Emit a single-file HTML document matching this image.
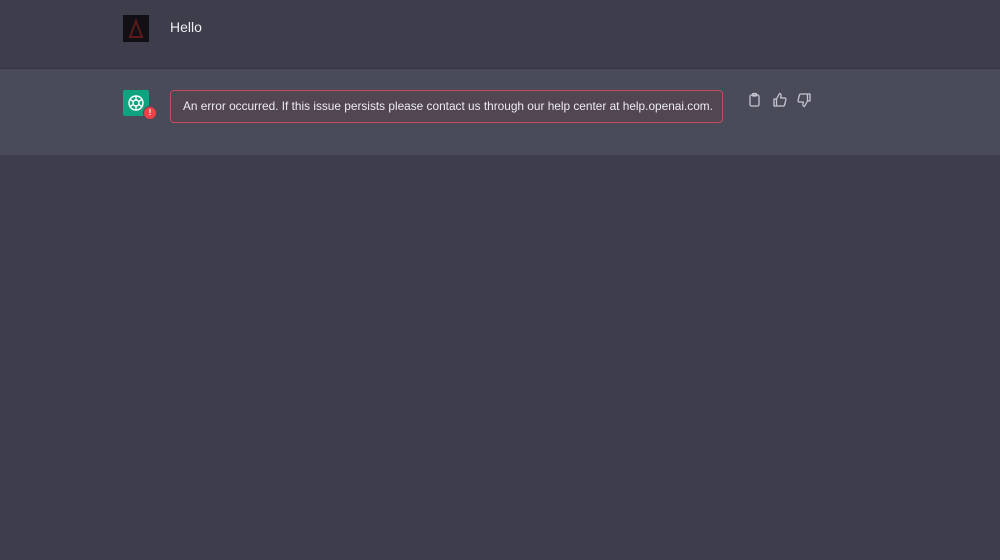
<!DOCTYPE html>
<html><head><meta charset="utf-8"><style>
html,body{margin:0;padding:0;width:1000px;height:560px;overflow:hidden;background:#3e3d4b;font-family:"Liberation Sans",sans-serif;}
.row1{position:absolute;left:0;top:0;width:1000px;height:68px;background:#3e3d4b;border-bottom:1px solid #353440;}
.row2{position:absolute;left:0;top:69px;width:1000px;height:86px;background:#4a4b59;border-bottom:1px solid #3e3d4b;}
.av1{position:absolute;left:123px;top:15px;width:26px;height:27px;background:#121015;}
.hello{position:absolute;left:170px;top:19px;color:#eceef1;font-size:14px;}
.av2{position:absolute;left:123px;top:90px;width:26px;height:26px;background:#10a37f;border-radius:2px;}
.err{position:absolute;left:143px;top:106px;width:12px;height:12px;border-radius:50%;background:#ef4146;border:1px solid #4a4b59;color:#fff;font-size:8px;text-align:center;line-height:12px;font-weight:bold;}
.box{position:absolute;left:170px;top:90px;width:553px;height:33px;border:1px solid #c9485e;border-radius:4px;background:#514652;box-sizing:border-box;color:#ececf1;font-size:11.85px;line-height:31px;padding-left:12px;white-space:nowrap;}
.ic{position:absolute;top:92px;}
</style></head><body>
<div class="row1"></div>
<div class="row2"></div>
<div class="av1"><svg width="26" height="27" viewBox="0 0 26 27"><path d="M7 22 L13 6 L19 22 Z" fill="none" stroke="#5a1a1a" stroke-width="2"/></svg></div>
<div class="hello">Hello</div>
<div class="av2"><svg width="26" height="26" viewBox="0 0 26 26"><g fill="none" stroke="#fff" stroke-width="1.4"><circle cx="13" cy="13" r="7"/><circle cx="13" cy="13" r="3"/><path d="M13 6v4M13 16v4M6.9 9.5l3.5 2M15.6 14.5l3.5 2M6.9 16.5l3.5-2M15.6 11.5l3.5-2"/></g></svg></div>
<div class="err">!</div>
<div class="box">An error occurred. If this issue persists please contact us through our help center at help.openai.com.</div>
<svg class="ic" style="left:748px" width="14" height="16" viewBox="0 0 14 16"><g fill="none" stroke="#c5c5d2" stroke-width="1.3"><rect x="2" y="3" width="9" height="11" rx="1.5"/><rect x="4.5" y="1.5" width="4" height="2.5" rx="0.8"/></g></svg>
<svg class="ic" style="left:772px" width="16" height="16" viewBox="0 0 16 16"><g fill="none" stroke="#c5c5d2" stroke-width="1.3" stroke-linejoin="round"><path d="M2 7h2.5v7H2zM4.5 7l3-5.5c1 0 1.8.8 1.6 1.8L8.7 6h4c.8 0 1.4.7 1.2 1.5l-1.2 5.2c-.2.8-.8 1.3-1.6 1.3H4.5"/></g></svg>
<svg class="ic" style="left:796px" width="16" height="16" viewBox="0 0 16 16"><g fill="none" stroke="#c5c5d2" stroke-width="1.3" stroke-linejoin="round"><path d="M14 9h-2.5V2H14zM11.5 9l-3 5.5c-1 0-1.8-.8-1.6-1.8L7.3 10h-4c-.8 0-1.4-.7-1.2-1.5l1.2-5.2C3.5 2.5 4.1 2 4.9 2h6.6"/></g></svg>
</body></html>
